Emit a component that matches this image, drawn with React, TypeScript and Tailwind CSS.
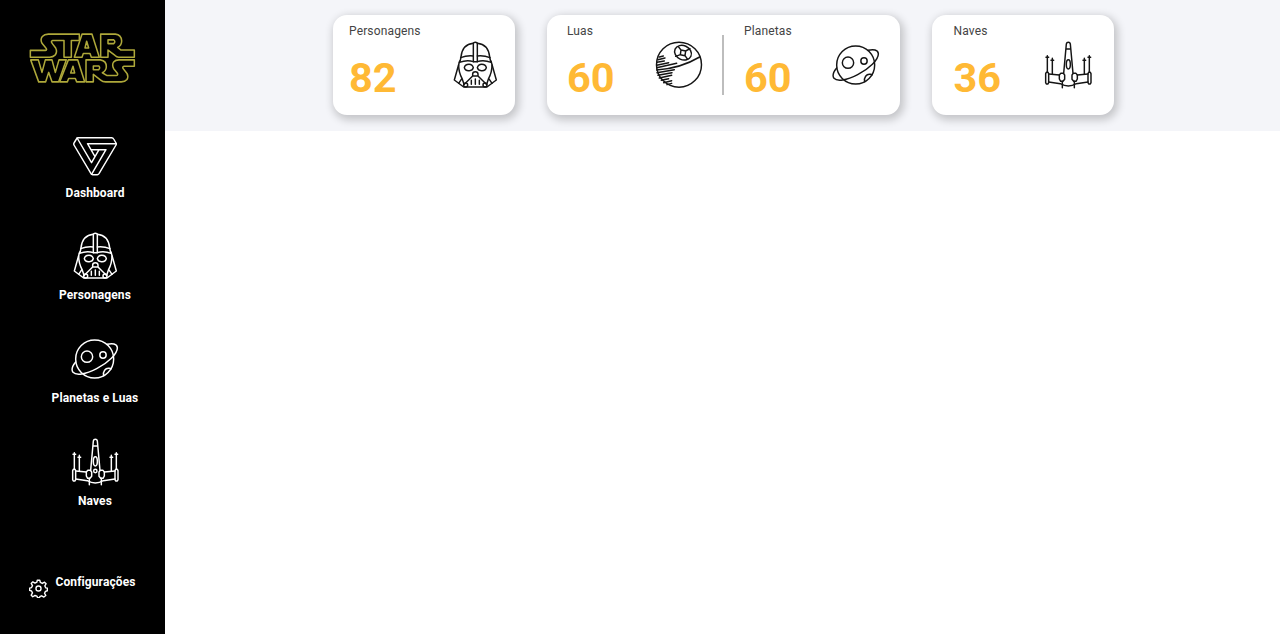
import type { ReactNode } from "react";

type IconProps = { className?: string };

function Glyph({ className = "", children }: { className?: string; children: ReactNode }) {
  return (
    <svg
      viewBox="0 0 144 144"
      className={`h-12 w-12 shrink-0 ${className}`}
      fill="none"
      stroke="currentColor"
      strokeWidth="4.4"
      strokeLinecap="round"
      strokeLinejoin="round"
    >
      {children}
    </svg>
  );
}

function VaderIcon({ className }: IconProps) {
  return (
    <Glyph className={className}>
      <path d="M67 62V6q6-4 12 0v56" />
      <path d="M67 7Q34 10 30 48L27 62M79 7q33 3 37 41l3 14" />
      <path d="M29 50q18-7 38-5M117 50q-18-7-38-5" />
      <path d="M25 64q24-9 42-2h12q18-7 42 2" />
      <path d="M26 60L10 117l28 21h70l28-21-16-57" />
      <path d="M23 72q0 22 10 40l6 18M123 72q0 22-10 40l-6 18M33 112L23 127M113 112l10 15" />
      <path d="M40 80q2-10 14-10 10 0 13 10-2 9-12 9-13 1-15-9zM106 80q-2-10-14-10-10 0-13 10 2 9 12 9 13 1 15-9z" />
      <path d="M65 105v-6q0-7 8-7t8 7v6zM65 105L40 130M81 105l25 25M61 118v12M73 114v16M85 118v12" />
      <circle cx="44" cy="132" r="6" />
      <circle cx="102" cy="132" r="6" />
    </Glyph>
  );
}

function PlanetIcon({ className }: IconProps) {
  return (
    <Glyph className={className}>
      <circle cx="71" cy="72" r="57" />
      <circle cx="48" cy="65" r="17" />
      <circle cx="96" cy="60" r="9.5" />
      <path d="M108 28c16-4 30-2 31 10 1 18-28 46-62 63-34 18-62 21-71 11-5-7-2-19 8-31" />
      <path d="M98 122c-3-12 5-24 17-22l6 1" />
    </Glyph>
  );
}

function DeathStarIcon({ className }: IconProps) {
  return (
    <Glyph className={className}>
      <circle cx="72" cy="71" r="67.5" />
      <path d="M134 48Q77 82 5 87" />
      <ellipse cx="84" cy="35" rx="26" ry="21" transform="rotate(24 84 35)" />
      <path d="M78 27l14 3-2 14-14-3zM78 27l-8-10M92 30l13-7M90 44l8 11M76 41l-14 5" />
      <path d="M13 48l12-3M9 56l21-5M6 64l22-4M5 73l36-8M5 80l60-13M6 95l52-9M9 103l42-8M13 111l37-8M19 118l22-5M26 125l24-6M36 131l14-4" />
    </Glyph>
  );
}

function XWingIcon({ className, droid = false }: IconProps & { droid?: boolean }) {
  return (
    <Glyph className={className}>
      <path d="M59 97L67 9q1-5 6-5t6 5l8 88M66 24h14" />
      <ellipse cx="73" cy="70" rx="6" ry="14" />
      {droid && <circle cx="73" cy="99" r="5" />}
      <path d="M50 97h8l4 5v13l-5 6h-7l-4-7v-12zM96 97h-8l-4 5v13l5 6h7l4-7v-12z" />
      <path d="M14 99l32 3M132 99l-32 3M14 123l35 5q24 14 48 0l35-5" />
      <path d="M7 94h5l2 4v27l-2 4H7l-2-4V98zM139 94h-5l-2 4v27l2 4h5l2-4V98z" />
      <path d="M10 44v50M25 52v47M136 44v50M121 52v47M6 49h8M21 58h8M132 49h8M117 58h8M55 121v19M91 121v19" />
    </Glyph>
  );
}

function TriangleIcon({ className }: IconProps) {
  return (
    <Glyph className={className}>
      <g transform="translate(0 13)">
        <path d="M22 10H122Q126 10 128 14L135 26Q137 29 135 32L84 118Q82 121 79 121H65Q62 121 60 118L9 32Q7 29 9 26L17 13Q19 10 22 10z" />
        <path d="M18.300 11L61.600 85 84.100 46M136.100 28H49.500L72 67M61.600 120L104.900 46H60" />
      </g>
    </Glyph>
  );
}

function GearIcon() {
  return (
    <svg
      viewBox="0 0 60 60"
      className="h-[19px] w-[19px] shrink-0"
      fill="none"
      stroke="currentColor"
      strokeWidth="4.4"
      strokeLinejoin="round"
    >
      <circle cx="30" cy="30" r="8" />
      <path d="M26 4h8l2 7 6 3 7-4 5 5-4 7 3 6 5 1v8l-6 2-3 6 4 7-6 5-7-4-5 2-2 4h-6l-2-5-6-2-7 4-5-5 4-7-3-6-6-2v-7l6-2 3-6-4-7 5-5 7 4 6-3z" />
    </svg>
  );
}

function Logo() {
  return (
    <svg
      viewBox="0 0 375 195"
      preserveAspectRatio="none"
      className="h-[66px] w-[125px]"
      fill="none"
      stroke="#aea83a"
      strokeWidth="4.6"
      strokeLinejoin="round"
    >
      <path d="M31 75H76Q83 74 77 67L66 54Q60 43 67 34 73 27 85 27H178V46H154V95H132V46H98Q91 48 97 55L107 68Q113 80 105 89 99 95 89 95H31z" />
      <path d="M186 27H216L238 95H214L210 84H190L186 95H163zM200 48L195 68H206z" />
      <path d="M242 27H286Q304 29 305 47 305 60 293 66L303 74H343V95H296Q290 95 285 90L264 74V95H242zM264 44H281Q288 49 281 55H264z" />
      <path d="M32 103H55L66 140 76 103H96L106 140 117 103H139L116 168H96L86 140 77 168H56z" />
      <path d="M145 103H173L194 168H170L166 158H146L142 168H119zM159 122L152 142H164z" />
      <path d="M198 103H241Q260 106 259 124 258 136 247 141L260 149H289Q296 148 291 141L281 129Q275 118 281 109 286 103 297 103H343V122H312Q305 124 311 131L321 143Q326 153 321 161 315 168 304 168H257Q248 168 242 163L220 146V168H198zM220 121H236Q242 126 236 132H220z" />
    </svg>
  );
}

function NavItem({ label, children }: { label: string; children: ReactNode }) {
  return (
    <a className="flex h-[102.800px] flex-col items-center text-[12px] leading-[14px] font-bold tracking-[0.1px] text-white">
      {children}
      <span className="mt-2">{label}</span>
    </a>
  );
}

function Stat({ label, value, className, children }: { label: string; value: number; className: string; children: ReactNode }) {
  return (
    <div className={`flex justify-between ${className}`}>
      <div className="flex flex-col pt-2">
        <span className="text-[12px] leading-4 tracking-[0.150px] text-[#444]">{label}</span>
        <strong className="mt-[13.500px] text-[41.500px] leading-[49px] font-bold text-[#ffb935]">{value}</strong>
      </div>
      <div className="pt-[26px] text-[#151515]">{children}</div>
    </div>
  );
}

const card = "flex h-[100px] rounded-[14px] bg-white shadow-[2px_3px_8px_2px_rgba(0,0,0,0.2)]";

export default function App() {
  return (
    <div className="flex h-[634px] w-full overflow-hidden bg-white font-['Roboto',sans-serif]">
      <aside className="flex w-[165px] shrink-0 flex-col bg-black text-white">
        <div className="h-[90px] pt-[25px] pl-5">
          <Logo />
        </div>
        <nav className="ml-[25px] flex w-[140px] flex-col pt-[39.500px]">
          <NavItem label="Dashboard"><TriangleIcon /></NavItem>
          <NavItem label="Personagens"><VaderIcon /></NavItem>
          <NavItem label="Planetas e Luas"><PlanetIcon /></NavItem>
          <NavItem label="Naves"><XWingIcon droid /></NavItem>
        </nav>
        <a className="mt-[34px] ml-[29px] flex gap-[7.500px] text-[12px] leading-[14px] font-bold tracking-[0.1px]">
          <span className="pt-1"><GearIcon /></span>
          <span>Configurações</span>
        </a>
      </aside>
      <main className="flex-1">
        <header className="flex h-[131px] gap-[31.500px] bg-[#f4f5f9] pt-[15px] pl-[167.500px]">
          <section className={`${card} w-[182.500px]`}>
            <Stat label="Personagens" value={82} className="w-full pr-[16px] pl-[16.500px]"><VaderIcon /></Stat>
          </section>
          <section className={`${card} w-[353.500px]`}>
            <Stat label="Luas" value={60} className="w-[175px] pr-[19px] pl-[20.500px]"><DeathStarIcon /></Stat>
            <div className="mt-5 h-[60px] w-0.5 bg-[#bdbdbd]" />
            <Stat label="Planetas" value={60} className="flex-1 pr-5 pl-[20.500px]"><PlanetIcon /></Stat>
          </section>
          <section className={`${card} w-[182.500px]`}>
            <Stat label="Naves" value={36} className="w-full pr-[22px] pl-[22px]"><XWingIcon /></Stat>
          </section>
        </header>
      </main>
    </div>
  );
}
